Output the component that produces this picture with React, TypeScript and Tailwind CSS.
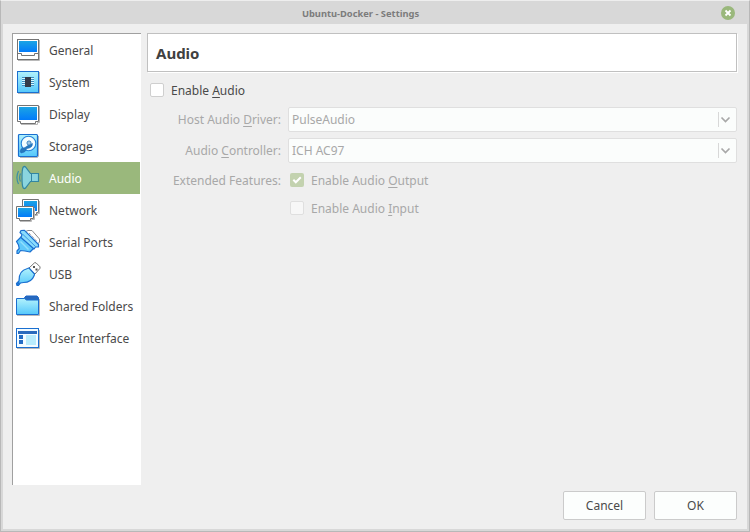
import type { ReactNode } from "react";

const BLUE = "#1a6fd0";

function Icon({ children }: { children: ReactNode }) {
  return (
    <svg className="h-[26px] w-[26px] shrink-0" viewBox="0 0 26 26" fill="none">
      <defs>
        <linearGradient id="screen" x1="0" y1="0" x2="0" y2="1">
          <stop offset="0" stopColor="#1ba4e4" />
          <stop offset="1" stopColor="#027bfa" />
        </linearGradient>
        <linearGradient id="ice" x1="0" y1="0" x2="0" y2="1">
          <stop offset="0" stopColor="#b2f2fc" />
          <stop offset="1" stopColor="#55c8fb" />
        </linearGradient>
      </defs>
      {children}
    </svg>
  );
}

const GeneralIcon = () => (
  <Icon>
    <path d="M3 23.5h21.5V3" stroke="#b9b9b9" />
    <rect x="2.5" y="2.5" width="21" height="20" fill="#fff" stroke="#747474" />
    <rect x="4" y="4" width="18" height="11" fill="url(#screen)" />
    <path d="M2.5 16.5h4v2h13v-2h4" stroke="#747474" />
  </Icon>
);

const SystemIcon = () => (
  <Icon>
    <path d="M3 24.5h21.5V3" stroke="#b9b9b9" />
    <rect x="2.5" y="2.5" width="21" height="21" fill="url(#ice)" stroke={BLUE} />
    <path d="M7 8.5h12M7 10.5h12M7 12.5h12M7 14.5h12M7 16.5h12" stroke="#3b8dc0" />
    <path d="M7 9.5h12M7 11.5h12M7 13.5h12M7 15.5h12" stroke="#d8f8ff" />
    <rect x="10" y="8" width="6" height="10" fill="#343b48" />
  </Icon>
);

const DisplayIcon = () => (
  <Icon>
    <path d="M6 23.5h16.5v-2h2V5" stroke="#b9b9b9" />
    <path d="M2.5 4.5h21v16h-3v2h-15v-2h-3z" fill="#fff" stroke="#747474" />
    <rect x="4" y="6" width="18" height="13" fill="url(#screen)" />
  </Icon>
);

const StorageIcon = () => (
  <Icon>
    <path d="M5 24.5h17.5l1-1V3" stroke="#b9b9b9" />
    <rect x="3.5" y="1.5" width="19" height="22" rx="1" fill="url(#ice)" stroke={BLUE} strokeWidth="1.2" />
    <circle cx="13.5" cy="10.5" r="7.3" fill="#f4fdff" stroke="#2482d9" strokeWidth="1.1" />
    <path d="M17.5 10.5q0 4.500-5.500 5l-2.500 3.500-3.500 1-1-1.800 1.200-2.500 3.800-1.200 3.500-2.500z" fill="#2678bd" stroke="#1560b8" strokeWidth=".5" />
    <circle cx="14" cy="10" r="2" fill="#fff" stroke="#2678bd" />
    <circle cx="14" cy="10" r=".8" fill="#2678bd" />
  </Icon>
);

const AudioIcon = () => (
  <Icon>
    <path d="M15.500 8.500h8v8h-8l-5 6.500q-1 1-2.200 0-1.300-1.500-1.300-10.500T8.300 2q1.200-1 2.200 0z" fill="#8ad5df" stroke="#3386a2" strokeWidth="1.200" />
    <path d="M16.500 8.500v8" stroke="#3386a2" />
    <path d="M5.500 8.500q-1.800 4 0 8M3.500 6q-3.200 6.500 0 13" stroke="#3b8ea6" strokeWidth="1.200" />
  </Icon>
);

const NetworkIcon = () => (
  <Icon>
    <path d="M24.5 4v12.500h-2v2H18" stroke="#b9b9b9" />
    <path d="M7.500 2.500h16v13h-2v2h-12v-2h-2z" fill="#fff" stroke="#747474" />
    <rect x="9" y="4" width="13" height="10" fill="url(#screen)" />
    <path d="M19.500 11v11.500h-3v2H5" stroke="#b9b9b9" />
    <path d="M1.500 9.500h17v12h-3v2h-11v-2h-3z" fill="#fff" stroke="#747474" />
    <rect x="3" y="11" width="14" height="9" fill="url(#screen)" />
  </Icon>
);

const SerialIcon = () => (
  <Icon>
    <path d="M10.500 2.500 13 1.500h4l7.500 8.500v3l-2 2z" fill="#fff" stroke="#8a8a8a" />
    <path d="m14 4 8 8.500" stroke="#777" strokeDasharray="1 1" />
    <path d="m6 8 13 11-4 4-5-1-4.500-.5-2 3H2v-2.500L4.200 19.500 3.500 16 1.500 12.500z" fill="#5fc8fa" stroke={BLUE} strokeWidth="1.200" strokeLinejoin="round" />
    <path d="m6 1.500 3.500-.2L23.500 15.500v2.500h-3l-1.500 2L6 8.500 7 5.500 5 3.500z" fill="#8adcfc" stroke={BLUE} strokeWidth="1.200" strokeLinejoin="round" />
    <path d="m8 5.500 12.500 12" stroke="#2583dc" strokeWidth=".8" />
    <path d="m5.500 12.500 8 8" stroke="#92dffd" strokeWidth="1.500" />
  </Icon>
);

const UsbIcon = () => (
  <Icon>
    <path d="m14 7 5.500-5.200h1.500l4 4v1.500L20 13z" fill="#fff" stroke="#777" strokeLinejoin="round" />
    <path d="M18 6h2M20.500 8.500h2" stroke="#555" strokeWidth="1.800" />
    <path d="m12.500 7.500 1.500-.5 5.500 6-.3 1.500c-1.700 4.500-5.500 7-10.700 7l-3 .5-2 2.500H2l-.5-2L4 20c-.3-7 2-11 8.500-12.500z" fill="url(#ice)" stroke={BLUE} strokeWidth="1.200" />
    <path d="m2 24 2.500-2.500" stroke={BLUE} strokeWidth="2" />
  </Icon>
);

const FolderIcon = () => (
  <Icon>
    <path d="M2 22.5h22.5V6" stroke="#b9b9b9" />
    <path d="M9.500 6V4.500l1.500-1.500h11l1.500 1.500v3H9z" fill="#2868bd" stroke="#1c65c5" />
    <path d="M1.500 5.500h8l2 1.500h12v14.500h-22z" fill="url(#ice)" stroke={BLUE} />
  </Icon>
);

const WindowIcon = () => (
  <Icon>
    <path d="M2 23.5h22.5V5" stroke="#b9b9b9" />
    <rect x="1.5" y="3.5" width="22" height="19" fill="#f4fcff" stroke={BLUE} />
    <rect x="3" y="6" width="19" height="3" fill="#2b6bbd" />
    <rect x="4" y="10" width="4" height="4" fill="#236cc5" />
    <rect x="4" y="15" width="4" height="4" fill="#236cc5" />
    <rect x="11" y="10" width="10" height="10" fill="#b9ecfc" />
  </Icon>
);

const items = [
  ["General", GeneralIcon],
  ["System", SystemIcon],
  ["Display", DisplayIcon],
  ["Storage", StorageIcon],
  ["Audio", AudioIcon],
  ["Network", NetworkIcon],
  ["Serial Ports", SerialIcon],
  ["USB", UsbIcon],
  ["Shared Folders", FolderIcon],
  ["User Interface", WindowIcon],
] as const;

/** Underlined mnemonic letter of a label. */
function Key({ children }: { children: string }) {
  return <span className="underline decoration-1 underline-offset-[2px]">{children}</span>;
}

function Combo({ value }: { value: string }) {
  return (
    <div className="flex h-[25px] w-[449px] items-center rounded-[2px] border border-[#dfdfdf] bg-[#fbfdfc] pl-[3px]">
      <span className="grow">{value}</span>
      <span className="mr-[1px] h-[15px] w-px bg-[#d8d8d8]" />
      <svg className="mr-[5px] h-[9px] w-[11px]" viewBox="0 0 11 9" fill="none">
        <path d="m1.500 2.500 4 4 4-4" stroke="#a8a8a8" strokeWidth="1.700" />
      </svg>
    </div>
  );
}

export default function App() {
  return (
    <div className="flex h-[532px] w-[750px] flex-col border border-[#b8b8b8] border-t-[#eeeeee] bg-[#d8d8d8] px-[2px] pb-[2px] font-['Noto_Sans',sans-serif] text-[12px] leading-4 text-[#4a4a4a]">
      <header className="flex h-[23px] shrink-0 items-center">
        <h1 className="grow pt-[2px] pr-[3px] text-center text-[9.330px] font-bold text-[#7c7c7c]">Ubuntu-Docker - Settings</h1>
        <svg className="mr-[12px] h-[14px] w-[14px]" viewBox="0 0 14 14">
          <circle cx="7" cy="7" r="7" fill="#9ab87c" />
          <path d="m4.500 4.500 5 5m0-5-5 5" stroke="#fff" strokeWidth="1.800" />
        </svg>
      </header>
      <main className="flex grow flex-col bg-[#efefef] pt-[9px] pr-[10px] pl-[9px]">
        <div className="flex">
          <nav className="h-[452px] w-[129px] shrink-0 border-t border-l border-[#a0a0a0] bg-white">
            {items.map(([label, Glyph]) => (
              <div
                key={label}
                className={`flex h-8 w-[127px] items-center gap-[8px] pl-[2px] whitespace-nowrap ${
                  label === "Audio" ? "bg-[#9ab87c] text-white" : ""
                }`}
              >
                <Glyph />
                <span className="pt-[2px]">{label}</span>
              </div>
            ))}
          </nav>
          <section className="ml-[6px] w-[590px]">
            <h2 className="flex h-[39px] items-center border border-[#c0c0c0] bg-white pl-[8px] text-[15px] font-bold text-[#404040] shadow-[1px_1px_0_#fff]">
              Audio
            </h2>
            <label className="mt-[10px] flex h-4 items-center pl-[3px]">
              <span className="mr-[7px] h-[14px] w-[14px] rounded-[2px] border border-[#cfcfcf] bg-white" />
              <span className="-mb-[2px]">Enable <Key>A</Key>udio</span>
            </label>
            <div className="mt-[9px] grid grid-cols-[134px_449px] gap-x-[7px] text-[#a8a8a8]">
              <div className="flex h-[31px] items-start justify-end pt-[5px]"><span>Host Audio <Key>D</Key>river:</span></div>
              <Combo value="PulseAudio" />
              <div className="flex h-[31px] items-start justify-end pt-[5px]"><span>Audio <Key>C</Key>ontroller:</span></div>
              <Combo value="ICH AC97" />
              <div className="flex h-[28px] items-start justify-end pt-[4px]">Extended Features:</div>
              <div className="flex h-[22px] items-center pl-[2px]">
                <span className="mr-[7px] flex h-[14px] w-[14px] items-center justify-center rounded-[2px] bg-[#c3d2af]">
                  <svg className="h-[10px] w-[10px]" viewBox="0 0 10 10" fill="none">
                    <path d="m1.300 4.800 2.500 2.500 5-5" stroke="#fff" strokeWidth="2" />
                  </svg>
                </span>
                <span className="pt-[2px]">Enable Audio <Key>O</Key>utput</span>
              </div>
              <span />
              <div className="flex h-[22px] items-center pl-[2px]">
                <span className="mr-[7px] h-[14px] w-[14px] rounded-[2px] border border-[#dfdfdf] bg-[#f7f7f7]" />
                <span className="pt-[2px]">Enable Audio <Key>I</Key>nput</span>
              </div>
            </div>
          </section>
        </div>
        <footer className="mt-[6px] flex justify-end gap-[8px]">
          {["Cancel", "OK"].map((text) => (
            <button key={text} className="h-[29px] w-[83px] rounded-[2px] border border-[#cbcbcb] bg-[#fcfefd]">
              {text}
            </button>
          ))}
        </footer>
      </main>
    </div>
  );
}
